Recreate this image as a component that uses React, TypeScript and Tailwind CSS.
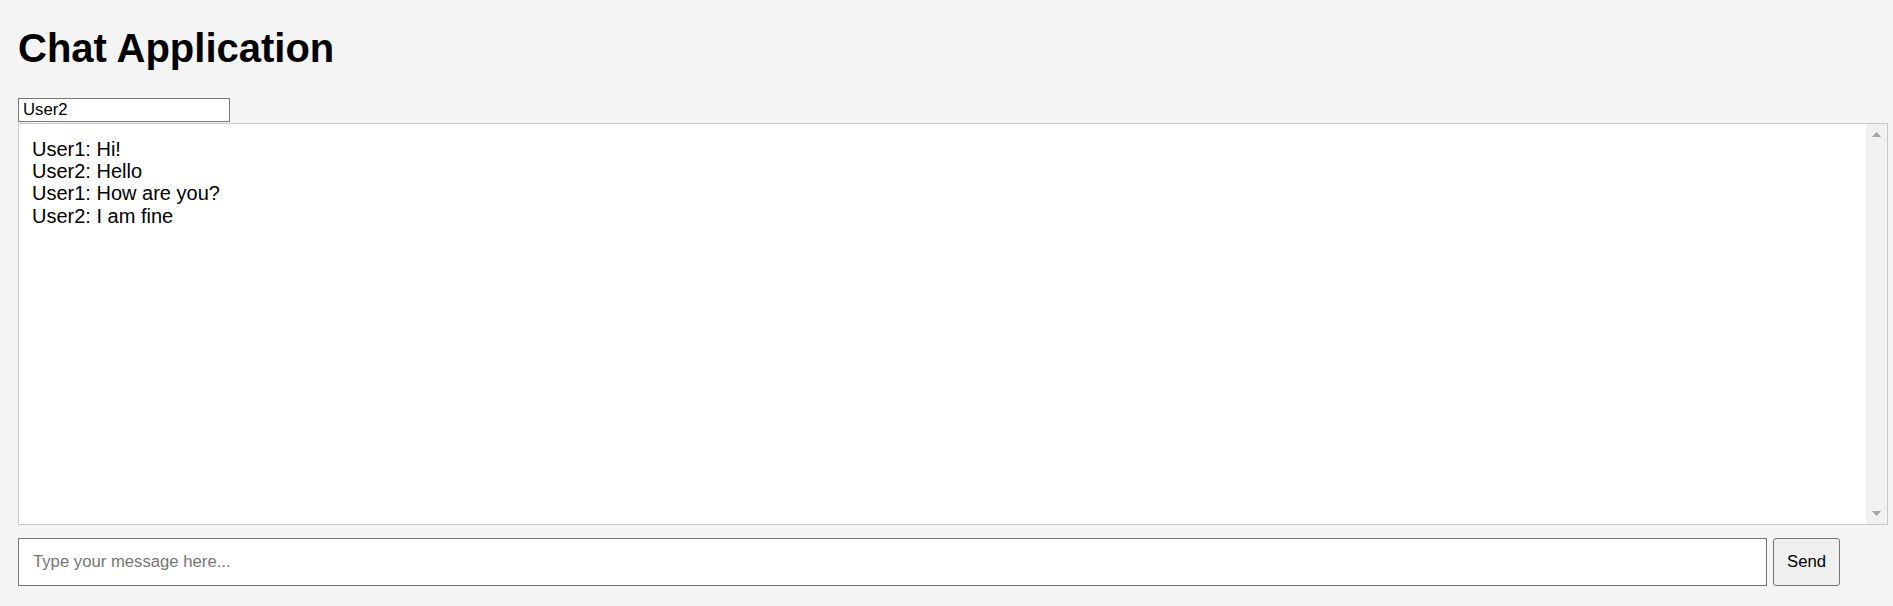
import React, { useState } from "react";

const messages = [
    { user: "User1", text: "Hi!" },
    { user: "User2", text: "Hello" },
    { user: "User1", text: "How are you?" },
    { user: "User2", text: "I am fine" },
];

function ScrollArrow({ up }: { up: boolean }) {
    return (
        <svg width="9" height="5" viewBox="0 0 9 5" className="block">
            {up ? <polygon points="4.5,0 9,5 0,5" fill="#a3a3a3" /> : <polygon points="0,0 9,0 4.5,5" fill="#a3a3a3" />}
        </svg>
    );
}

export default function App() {
    const [username, setUsername] = useState("User2");
    const [draft, setDraft] = useState("");

    return (
        <div className="min-h-[606px] bg-[#f4f4f4] pl-[18px] pt-[25px] font-['Liberation_Sans',Arial,sans-serif] text-black">
            <h1 className="text-[40px] leading-[46px] font-bold">Chat Application</h1>

            <input
                value={username}
                onChange={(e) => setUsername(e.target.value)}
                className="mt-[27px] block h-[24px] w-[212px] border border-[#767676] bg-white px-[4px] text-[16.7px] leading-[22px] outline-none"
            />

            {/* message list with classic scrollbar */}
            <div className="mt-[1px] flex h-[402px] w-[1870px] border border-[#c8c8c8] bg-white">
                <div className="flex-1 pl-[13px] pt-[14px] text-[20px] leading-[22.2px]">
                    {messages.map((m, i) => (
                        <div key={i}>
                            {m.user}: {m.text}
                        </div>
                    ))}
                </div>
                <div className="flex w-[21px] flex-col items-center justify-between bg-[#f1f1f1] py-[8px]">
                    <ScrollArrow up />
                    <ScrollArrow up={false} />
                </div>
            </div>

            <div className="mt-[13px] flex gap-[6px]">
                <input
                    value={draft}
                    onChange={(e) => setDraft(e.target.value)}
                    placeholder="Type your message here..."
                    className="h-[48px] w-[1749px] border border-[#767676] bg-white px-[14px] text-[16.7px] outline-none placeholder:text-[#757575]"
                />
                <button className="h-[48px] w-[67px] rounded-[3px] border border-[#767676] bg-[#efefef] text-[16.7px] text-black">
                    Send
                </button>
            </div>
        </div>
    );
}
